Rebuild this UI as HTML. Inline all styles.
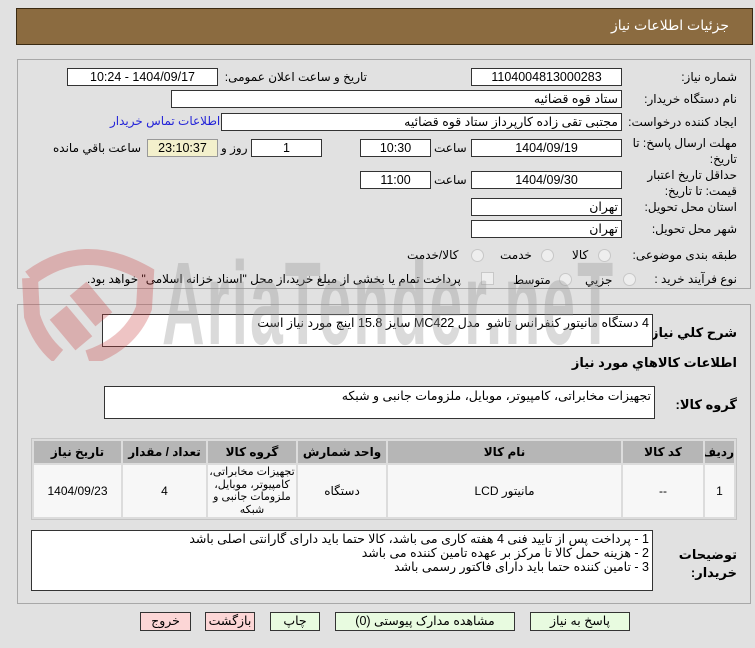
<!DOCTYPE html>
<html><head><meta charset="utf-8"><style>
body{margin:0;width:755px;height:648px;background:#e1e1e1;position:relative;overflow:hidden;font-family:Tahoma,"Liberation Sans","DejaVu Sans",sans-serif;font-size:12px;color:#000}
.a{position:absolute;white-space:nowrap}
.hdr{left:16px;top:8px;width:735px;height:35px;background:#8b6b40;border:1px solid #3a2a12}
.pan{position:absolute;left:17px;width:732px;border:1px solid #a8a8a8}
.in{position:absolute;background:#fff;border:1px solid #333;height:16px;line-height:16px;direction:rtl;padding:0 3px;box-sizing:content-box;font-size:12.5px}
.c{text-align:center}
.l{direction:rtl;text-align:right}
.rad{position:absolute;width:11px;height:11px;border-radius:50%;border:1px solid #c8c8c8;background:#eee}
.btn{position:absolute;top:612px;height:17px;border:1px solid #333;background:#e8fbe0;text-align:center;line-height:17px;font-size:12.5px}
table{border-collapse:separate;border-spacing:2px;position:absolute;left:31px;top:438px;width:706px;background:#dcdcdc;border:1px solid #c4c4c4;table-layout:fixed}
th{background:#b6b6b6;height:22px;font-weight:bold;font-size:12px;padding:0;overflow:hidden;white-space:nowrap}
td{background:#f7f7f7;text-align:center;height:52px;font-size:12px;padding:0}
</style></head><body>
<div class="a hdr"></div>
<div class="a" style="right:26px;top:17px;color:#fff;font-size:14px">جزئیات اطلاعات نیاز</div>

<div class="pan" style="top:59px;height:228px"></div>
<div class="pan" style="top:304px;height:298px"></div>

<div class="a l" style="right:18px;top:70px">شماره نیاز:</div>
<div class="in c" style="left:471px;top:68px;width:143px">1104004813000283</div>
<div class="a l" style="right:388px;top:70px">تاریخ و ساعت اعلان عمومی:</div>
<div class="in c" style="left:67px;top:68px;width:143px">1404/09/17 - 10:24</div>
<div class="a l" style="right:18px;top:92px">نام دستگاه خریدار:</div>
<div class="in" style="left:171px;top:90px;width:443px">ستاد قوه قضائیه</div>
<div class="a l" style="right:18px;top:115px">ایجاد کننده درخواست:</div>
<div class="in" style="left:221px;top:113px;width:393px">مجتبی تقی زاده کارپرداز ستاد قوه قضائیه</div>
<div class="a l" style="left:110px;top:114px;color:#2424d8">اطلاعات تماس خریدار</div>
<div class="a l" style="right:18px;top:135px;line-height:16px">مهلت ارسال پاسخ: تا<br>تاریخ:</div>
<div class="in c" style="left:471px;top:139px;width:143px">1404/09/19</div>
<div class="a" style="left:434px;top:141px">ساعت</div>
<div class="in c" style="left:360px;top:139px;width:63px">10:30</div>
<div class="in c" style="left:251px;top:139px;width:63px">1</div>
<div class="a l" style="left:221px;top:141px">روز و</div>
<div class="in c" style="left:147px;top:139px;width:63px;background:#f3f0cc;border-color:#999">23:10:37</div>
<div class="a l" style="left:53px;top:141px">ساعت باقي مانده</div>
<div class="a l" style="right:18px;top:167px;line-height:16px">حداقل تاریخ اعتبار<br>قیمت: تا تاریخ:</div>
<div class="in c" style="left:471px;top:171px;width:143px">1404/09/30</div>
<div class="a" style="left:434px;top:173px">ساعت</div>
<div class="in c" style="left:360px;top:171px;width:63px">11:00</div>
<div class="a l" style="right:18px;top:200px">استان محل تحویل:</div>
<div class="in" style="left:471px;top:198px;width:143px">تهران</div>
<div class="a l" style="right:18px;top:222px">شهر محل تحویل:</div>
<div class="in" style="left:471px;top:220px;width:143px">تهران</div>
<div class="a l" style="right:18px;top:248px">طبقه بندی موضوعی:</div>
<div class="rad" style="left:598px;top:249px"></div><div class="a" style="left:572px;top:248px">کالا</div>
<div class="rad" style="left:541px;top:249px"></div><div class="a" style="left:500px;top:248px">خدمت</div>
<div class="rad" style="left:471px;top:249px"></div><div class="a" style="left:407px;top:248px">کالا/خدمت</div>
<div class="a l" style="right:18px;top:272px">نوع فرآیند خرید :</div>
<div class="rad" style="left:623px;top:273px"></div><div class="a" style="left:585px;top:273px">جزیي</div>
<div class="rad" style="left:559px;top:273px"></div><div class="a" style="left:513px;top:273px">متوسط</div>
<div class="a" style="left:481px;top:272px;width:11px;height:11px;border:1px solid #c8c8c8;background:#eee"></div>
<div class="a l" style="left:87px;top:272px">پرداخت تمام یا بخشی از مبلغ خرید،از محل "اسناد خزانه اسلامی" خواهد بود.</div>

<div class="a l" style="right:18px;top:325px;font-weight:bold;font-size:13px">شرح كلي نياز:</div>
<div class="in" style="left:102px;top:314px;width:543px;height:31px;background:#fff">4 دستگاه مانیتور کنفرانس تاشو&nbsp; مدل MC422 سایز 15.8 اینچ مورد نیاز است</div>
<div class="a l" style="right:18px;top:355px;font-weight:bold;font-size:13px">اطلاعات کالاهاي مورد نياز</div>
<div class="a l" style="right:18px;top:397px;font-weight:bold;font-size:13px">گروه کالا:</div>
<div class="in" style="left:104px;top:386px;width:543px;padding-top:1px;height:30px">تجهیزات مخابراتی، کامپیوتر، موبایل، ملزومات جانبی و شبکه</div>

<table dir="rtl"><colgroup><col style="width:29px"><col style="width:80px"><col style="width:233px"><col style="width:88px"><col style="width:88px"><col style="width:83px"><col></colgroup>
<tr><th>رديف</th><th>کد کالا</th><th>نام کالا</th><th>واحد شمارش</th><th>گروه کالا</th><th>تعداد / مقدار</th><th>تاریخ نیاز</th></tr>
<tr><td>1</td><td>--</td><td>مانیتور LCD</td><td>دستگاه</td><td style="line-height:12.5px;font-size:11px">تجهیزات مخابراتی،<br>کامپیوتر، موبایل،<br>ملزومات جانبی و<br>شبکه</td><td>4</td><td>1404/09/23</td></tr></table>

<div class="a l" style="right:18px;top:546px;font-weight:bold;font-size:13px;line-height:18px">توضیحات<br>خریدار:</div>
<div class="in" style="left:31px;top:530px;width:614px;line-height:14px;padding-top:1px;height:58px">1 - پرداخت پس از تایید فنی 4 هفته کاری می باشد، کالا حتما باید دارای گارانتی اصلی باشد<br>2 - هزینه حمل کالا تا مرکز بر عهده تامین کننده می باشد<br>3 - تامین کننده حتما باید دارای فاکتور رسمی باشد</div>

<div class="btn" style="left:530px;width:98px">پاسخ به نیاز</div>
<div class="btn" style="left:335px;width:178px">مشاهده مدارک پیوستی (0)</div>
<div class="btn" style="left:270px;width:48px">چاپ</div>
<div class="btn" style="left:205px;width:48px;background:#fcd6d6">بازگشت</div>
<div class="btn" style="left:140px;width:49px;background:#fcd6d6">خروج</div>

<svg class="a" style="left:18px;top:246px" width="140" height="115" viewBox="0 0 140 115" opacity="0.3"><path d="M12 32 Q65 -8 128 28 L126 62 Q112 98 70 112" fill="none" stroke="#c84040" stroke-width="16"/><path d="M12 32 L14 70 Q22 95 40 110" fill="none" stroke="#c84040" stroke-width="16"/><rect x="62" y="38" width="22" height="40" fill="#c84040" transform="rotate(-40 73 58)"/><rect x="42" y="62" width="22" height="40" fill="#c84040" transform="rotate(-40 53 82)"/></svg>
<div class="a" style="left:162px;top:236px;font-size:118px;color:rgba(150,150,150,0.35);font-weight:bold;transform:scaleX(0.5);transform-origin:0 0;letter-spacing:4px;font-family:'Liberation Sans',sans-serif">AriaTender.neT</div>
</body></html>
